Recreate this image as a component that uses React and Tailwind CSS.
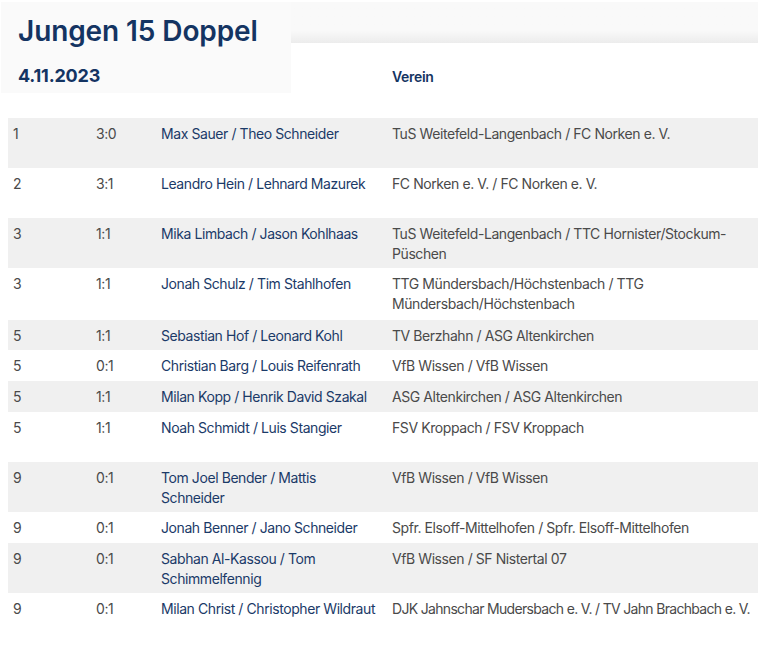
import React from "react";

const rows = [
  { r: "1", s: "3:0", n: ["Max Sauer / Theo Schneider"], c: ["TuS Weitefeld-Langenbach / FC Norken e. V."], h: "h-[50px]" },
  { r: "2", s: "3:1", n: ["Leandro Hein / Lehnard Mazurek"], c: ["FC Norken e. V. / FC Norken e. V."], h: "h-[50px]" },
  { r: "3", s: "1:1", n: ["Mika Limbach / Jason Kohlhaas"], c: ["TuS Weitefeld-Langenbach / TTC Hornister/Stockum-", "Püschen"], h: "h-[50px]" },
  { r: "3", s: "1:1", n: ["Jonah Schulz / Tim Stahlhofen"], c: ["TTG Mündersbach/Höchstenbach / TTG", "Mündersbach/Höchstenbach"], h: "h-[52px]" },
  { r: "5", s: "1:1", n: ["Sebastian Hof / Leonard Kohl"], c: ["TV Berzhahn / ASG Altenkirchen"], h: "h-[30px]" },
  { r: "5", s: "0:1", n: ["Christian Barg / Louis Reifenrath"], c: ["VfB Wissen / VfB Wissen"], h: "h-[31px]" },
  { r: "5", s: "1:1", n: ["Milan Kopp / Henrik David Szakal"], c: ["ASG Altenkirchen / ASG Altenkirchen"], h: "h-[31px]" },
  { r: "5", s: "1:1", n: ["Noah Schmidt / Luis Stangier"], c: ["FSV Kroppach / FSV Kroppach"], h: "h-[50px]" },
  { r: "9", s: "0:1", n: ["Tom Joel Bender / Mattis", "Schneider"], c: ["VfB Wissen / VfB Wissen"], h: "h-[50px]" },
  { r: "9", s: "0:1", n: ["Jonah Benner / Jano Schneider"], c: ["Spfr. Elsoff-Mittelhofen / Spfr. Elsoff-Mittelhofen"], h: "h-[31px]" },
  { r: "9", s: "0:1", n: ["Sabhan Al-Kassou / Tom", "Schimmelfennig"], c: ["VfB Wissen / SF Nistertal 07"], h: "h-[50px]" },
  { r: "9", s: "0:1", n: ["Milan Christ / Christopher Wildraut"], c: ["DJK Jahnschar Mudersbach e. V. / TV Jahn Brachbach e. V."], h: "h-[50px]", tight: true },
];

function Lines({ lines }) {
  return lines.map((l, i) => (
    <div key={i} className="whitespace-nowrap">
      {l}
    </div>
  ));
}

export default function App() {
  return (
    <div
      className="w-[760px] h-[650px] bg-white overflow-hidden"
      style={{ fontFamily: "Inter, 'Noto Sans', sans-serif" }}
    >
      <div className="flex pt-[2px]">
        <div className="w-[290px] h-[91px] bg-[#fafafa] ml-[1px] pl-[17px] pt-[9px]">
          <div className="text-[28px] leading-[40px] font-semibold text-[#143462] tracking-[-0.1px]">
            Jungen 15 Doppel
          </div>
          <div className="mt-[13px] text-[18px] leading-[24px] font-bold text-[#143462] tracking-[-0.2px]">
            4.11.2023
          </div>
        </div>
        <div className="flex-1 mr-[2px]">
          <div className="h-[41px] bg-gradient-to-b from-[#f9f9f9] from-70% to-[#ececec]" />
          <div className="pl-[101px] mt-[24px] text-[14px] leading-[20px] font-semibold text-[#143462] tracking-[-0.3px]">
            Verein
          </div>
        </div>
      </div>
      <div className="ml-[8px] mr-[2px] mt-[25px] text-[14px] leading-[20px] tracking-[-0.42px]">
        {rows.map((row, i) => (
          <div
            key={i}
            className={`grid grid-cols-[83px_65px_231px_1fr] pt-[6px] ${row.h} ${
              i % 2 === 0 ? "bg-[#f0f0f0]" : "bg-white"
            }`}
          >
            <div className="pl-[5px] text-[#4a4a4a]">{row.r}</div>
            <div className="pl-[5px] text-[#4a4a4a]">{row.s}</div>
            <div className="pl-[5px] text-[#1b3a68]">
              <Lines lines={row.n} />
            </div>
            <div className={`pl-[5px] text-[#4a4a4a] ${row.tight ? "tracking-[-0.68px]" : ""}`}>
              <Lines lines={row.c} />
            </div>
          </div>
        ))}
      </div>
    </div>
  );
}
